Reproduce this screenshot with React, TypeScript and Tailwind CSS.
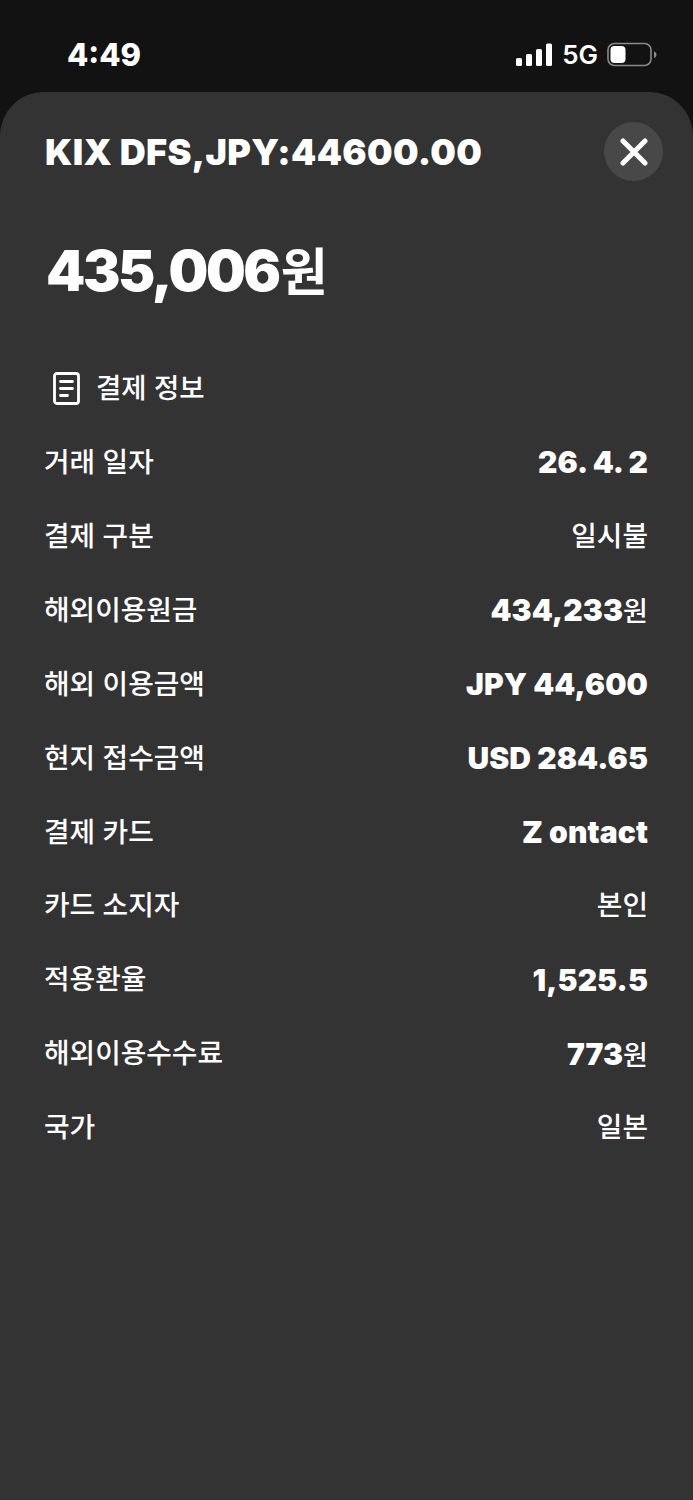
const rows: { label: string; value: string; unit?: string; bold?: boolean }[] = [
  { label: "거래 일자", value: "26. 4. 2", bold: true },
  { label: "결제 구분", value: "일시불" },
  { label: "해외이용원금", value: "434,233", unit: "원", bold: true },
  { label: "해외 이용금액", value: "JPY 44,600", bold: true },
  { label: "현지 접수금액", value: "USD 284.65", bold: true },
  { label: "결제 카드", value: "Z ontact", bold: true },
  { label: "카드 소지자", value: "본인" },
  { label: "적용환율", value: "1,525.5", bold: true },
  { label: "해외이용수수료", value: "773", unit: "원", bold: true },
  { label: "국가", value: "일본" },
];

function StatusBar() {
  return (
    <div className="flex h-[92px] items-start justify-between pl-[67px] pr-[36px] pt-[37px]">
      <span className="text-[31px] leading-[36px] font-extrabold">4:49</span>
      <div className="flex items-center gap-[9px] pt-[4px]">
        <svg width="36" height="24" viewBox="0 0 36 24" fill="white">
          <rect x="0" y="15" width="6" height="8" rx="1.5" />
          <rect x="10" y="11" width="6" height="12" rx="1.5" />
          <rect x="20" y="6" width="6" height="17" rx="1.5" />
          <rect x="30" y="0.5" width="6" height="22.5" rx="1.5" />
        </svg>
        <span className="ml-[1px] text-[26px] leading-[28px] font-semibold">5G</span>
        <svg width="50" height="26" viewBox="0 0 50 26" fill="none">
          <rect x="1" y="1.5" width="43" height="22" rx="6.5" stroke="#8a8a8a" strokeWidth="1.6" />
          <rect x="3.5" y="4" width="15" height="17" rx="4" fill="white" />
          <path d="M47 9.5c1.6.6 2.5 1.8 2.5 3.2s-.9 2.6-2.5 3.2z" fill="#8a8a8a" />
        </svg>
      </div>
    </div>
  );
}

export default function App() {
  return (
    <div className="h-[1500px] overflow-hidden bg-[#121212] text-white font-['Inter','Noto_Sans_CJK_KR',sans-serif]">
      <StatusBar />

      <div className="h-[1408px] rounded-t-[44px] bg-[#333333] pl-[44px] pr-[45px]">
        {/* title */}
        <div className="relative flex h-[118px] items-center pt-[1px]">
          <h1 className="ml-[1px] text-[36px] leading-[42px] font-black tracking-[0.35px]">KIX DFS,JPY:44600.00</h1>
          <button className="absolute right-[-15px] top-[30px] flex h-[59px] w-[59px] items-center justify-center rounded-full bg-[#484848]">
            <svg width="28" height="28" viewBox="0 0 28 28" fill="none" stroke="white" strokeWidth="5" strokeLinecap="round">
              <path d="M3 3l22 22M25 3L3 25" />
            </svg>
          </button>
        </div>

        {/* amount */}
        <div className="mt-[26px] ml-[2px] flex items-baseline leading-[70px]">
          <span className="text-[56px] font-black tracking-[-2.4px]">435,006</span>
          <span className="ml-[2px] text-[51px] font-semibold">원</span>
        </div>

        {/* section title */}
        <div className="mt-[62px] flex items-center gap-[16px] pl-[9px]">
          <svg width="27" height="33" viewBox="0 0 27 33" fill="none" stroke="white" strokeWidth="2.8" strokeLinecap="round">
            <rect x="1.5" y="1.5" width="24" height="30" rx="2.5" />
            <path d="M7.5 9.5h12M7.5 16.5h12M7.5 23.5h7" />
          </svg>
          <span className="text-[27.5px] leading-[36px] font-medium">결제 정보</span>
        </div>

        {/* detail rows */}
        <div className="mt-[20px] flex flex-col">
          {rows.map((r) => (
            <div key={r.label} className="flex h-[73.9px] items-center justify-between">
              <span className="text-[27.8px] font-medium">{r.label}</span>
              <span className={r.bold ? "text-[30px] font-black tracking-[0.1px]" : "text-[27.8px] font-medium"}>
                {r.value}
                {r.unit && <span className="text-[27px] font-medium">{r.unit}</span>}
              </span>
            </div>
          ))}
        </div>
      </div>
    </div>
  );
}
